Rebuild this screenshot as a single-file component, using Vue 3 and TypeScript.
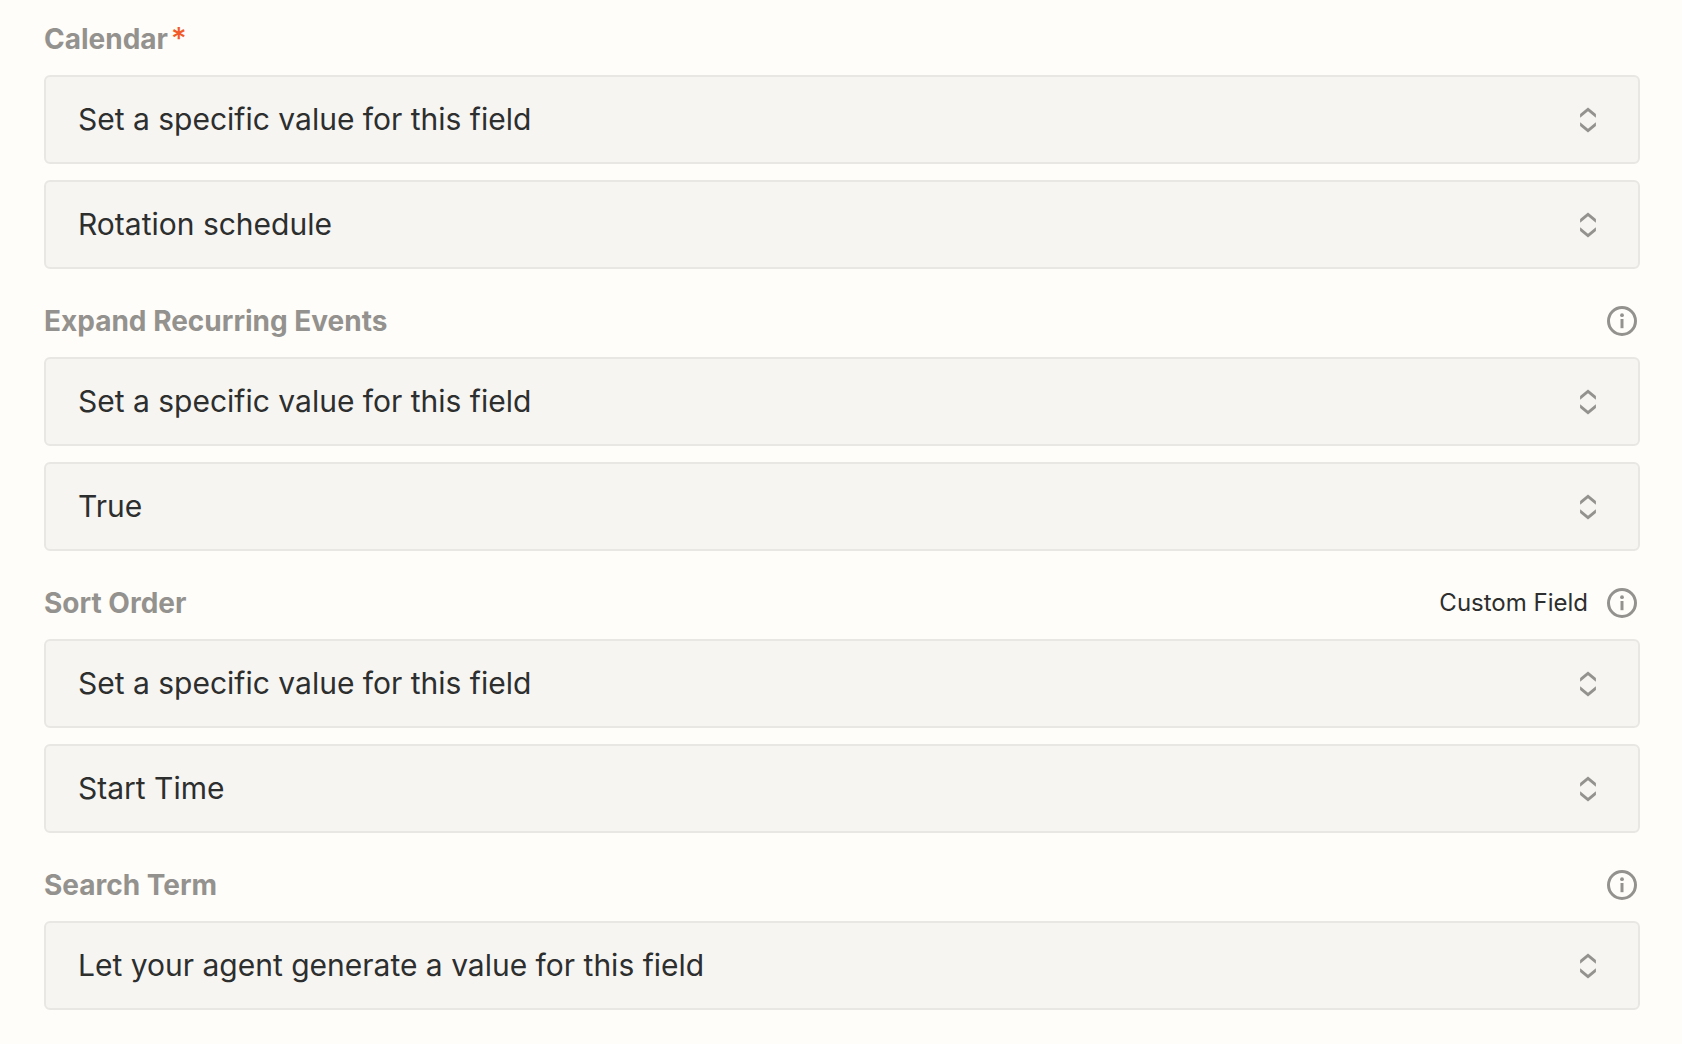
<script setup lang="ts">
import { reactive } from 'vue'

interface Choice {
  name: string
  value: string
  options: string[]
}

interface Field {
  id: string
  label: string
  required?: boolean
  note?: string
  info?: boolean
  choices: Choice[]
}

const specific = 'Set a specific value for this field'
const generated = 'Let your agent generate a value for this field'
const modes = [specific, generated]

const fields = reactive<Field[]>([
  {
    id: 'calendar',
    label: 'Calendar',
    required: true,
    choices: [
      { name: 'mode', value: specific, options: modes },
      { name: 'value', value: 'Rotation schedule', options: ['Rotation schedule'] },
    ],
  },
  {
    id: 'expand-recurring',
    label: 'Expand Recurring Events',
    info: true,
    choices: [
      { name: 'mode', value: specific, options: modes },
      { name: 'value', value: 'True', options: ['True', 'False'] },
    ],
  },
  {
    id: 'sort-order',
    label: 'Sort Order',
    note: 'Custom Field',
    info: true,
    choices: [
      { name: 'mode', value: specific, options: modes },
      { name: 'value', value: 'Start Time', options: ['Start Time'] },
    ],
  },
  {
    id: 'search-term',
    label: 'Search Term',
    info: true,
    choices: [{ name: 'mode', value: generated, options: modes }],
  },
])
</script>

<template>
  <form class="form" @submit.prevent>
    <section v-for="field in fields" :key="field.id" class="field">
      <div class="head">
        <label :id="`${field.id}-label`" class="label" :for="`${field.id}-mode`">
          {{ field.label }}<span v-if="field.required" class="required">*</span>
        </label>
        <span v-if="field.note" class="note">{{ field.note }}</span>
        <button v-if="field.info" type="button" class="info" :aria-label="`About ${field.label}`">
          <svg class="icon" viewBox="0 0 36 36" aria-hidden="true">
            <circle cx="18" cy="18" r="13.5" fill="none" stroke="currentColor" stroke-width="3" />
            <circle cx="18" cy="12.2" r="1.9" fill="currentColor" />
            <path d="M16.5 16h3v9.2h-3z" fill="currentColor" />
          </svg>
        </button>
      </div>
      <div class="choices">
        <div v-for="choice in field.choices" :key="choice.name" class="choice">
          <select
            :id="`${field.id}-${choice.name}`"
            v-model="choice.value"
            class="select"
            :aria-labelledby="`${field.id}-label`"
          >
            <option v-for="option in choice.options" :key="option" :value="option">{{ option }}</option>
          </select>
          <svg class="icon chevrons" viewBox="0 0 36 36" aria-hidden="true">
            <path
              d="M10.1 15.7V12.1L18 5.6L25.9 12.1V15.7L18 9.3zM10.1 20.3V23.9L18 30.4L25.9 23.9V20.3L18 26.7z"
              fill="currentColor"
            />
          </svg>
        </div>
      </div>
    </section>
  </form>
</template>

<style>
body {
  margin: 0;
  background: #fffdf9;
}
</style>

<style scoped>
.form {
  display: flex;
  flex-direction: column;
  gap: 34px;
  padding: 21px 42px 34px 44px;
  font-family: Inter, 'Liberation Sans', sans-serif;
  color: #2d2e2e;
}

.field {
  display: flex;
  flex-direction: column;
  gap: 18px;
}

.head {
  display: flex;
  align-items: center;
  gap: 16px;
  height: 36px;
}

.label {
  flex: 1;
  font-size: 28px;
  line-height: 36px;
  font-weight: 700;
  color: #94928e;
}

.required {
  margin-left: 3px;
  font-size: 30px;
  line-height: 30px;
  font-weight: 500;
  color: #f15a29;
}

.note {
  font-size: 24px;
  line-height: 36px;
}

.info {
  display: flex;
  padding: 0;
  border: 0;
  background: none;
  color: #94928e;
}

.icon {
  display: block;
  width: 36px;
  height: 36px;
}

.choices {
  display: flex;
  flex-direction: column;
  gap: 16px;
}

.choice {
  display: grid;
  align-items: center;
}

.choice > * {
  grid-area: 1 / 1;
}

.select {
  width: 100%;
  height: 89px;
  padding: 0 84px 2px 32px;
  border: 2px solid #e8e7e4;
  border-radius: 6px;
  background: #f6f5f2;
  appearance: none;
  font: inherit;
  font-size: 30px;
  line-height: 40px;
  color: inherit;
}

.chevrons {
  justify-self: end;
  margin-right: 34px;
  color: #94928e;
  pointer-events: none;
}
</style>
